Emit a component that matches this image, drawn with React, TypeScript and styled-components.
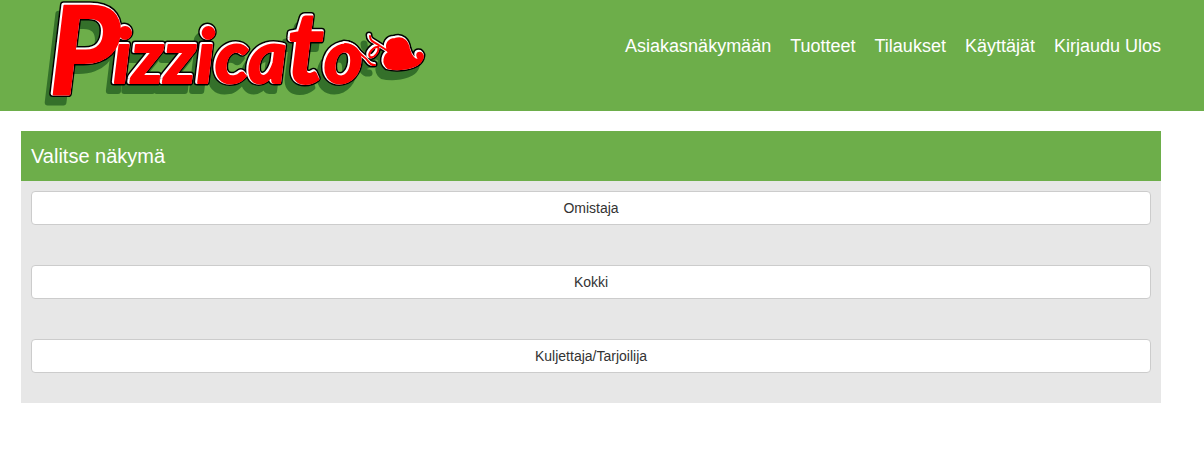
import React from "react";
import styled, { createGlobalStyle } from "styled-components";

const GlobalStyle = createGlobalStyle`
  *, *::before, *::after { box-sizing: border-box; }
  body {
    margin: 0;
    background: #fff;
    color: #333;
    font-family: Arial, "Liberation Sans", sans-serif;
    font-size: 14px;
    line-height: 20px;
  }
`;

const Header = styled.header`
  display: flex;
  justify-content: space-between;
  align-items: flex-start;
  padding: 0 43px 0 40px;
  background: #6dae4a;
`;

const HomeLink = styled.a`
  display: block;
  flex: none;
`;

const LogoArt = styled.svg`
  display: block;
  width: 392px;
  height: 111px;
`;

const LogoText = styled.text`
  font-family: Lato, "Liberation Sans", sans-serif;
  font-style: italic;
  font-weight: 700;
  font-size: 75px;
`;

const Initial = styled.tspan`
  font-size: 122px;
`;

const TallLetter = styled.tspan`
  font-size: 100px;
`;

const Nav = styled.nav`
  display: flex;
  flex-wrap: wrap;
  justify-content: flex-end;
  gap: 19px;
  padding-top: 36px;
`;

const NavLink = styled.a`
  color: #fff;
  font-size: 18px;
  line-height: 20px;
  text-decoration: none;
  white-space: nowrap;
`;

const Panel = styled.main`
  margin: 20px 43px 50px 21px;
  background: #e7e7e7;
`;

const PanelTitle = styled.h1`
  margin: 0;
  padding: 10px;
  background: #6dae4a;
  color: #fff;
  font-size: 20px;
  font-weight: 400;
  line-height: 30px;
`;

const ViewList = styled.div`
  display: flex;
  flex-direction: column;
  gap: 40px;
  padding: 10px 10px 30px;
`;

const ViewButton = styled.button`
  width: 100%;
  padding: 6px 12px;
  border: 1px solid #ccc;
  border-radius: 4px;
  background: #fff;
  color: #333;
  font: inherit;
  cursor: pointer;
`;

function Logo() {
  return (
    <LogoArt viewBox="40 0 392 111" role="img" aria-label="Pizzicato">
      <defs>
        <g id="wordmark" strokeLinejoin="round">
          <LogoText x="48" y="93">
            <Initial>P</Initial>
            <tspan x="112" y="82">izzica</tspan>
            <TallLetter>t</TallLetter>
            <tspan>o</tspan>
          </LogoText>
          <path d="M387 50C384 43 388 38 394 38C402 35 407 41 408 48C410 55 414 61 418 58C415 54 416 51 420 52C424 55 421 61 416 64C407 69 394 69 387 67C381 62 383 54 389 51Z" />
        </g>
        <g id="vine" fill="none" strokeLinecap="round" strokeLinejoin="round">
          <path d="M344 43C354 43 357 52 363 56C368 59 368 65 374 64" />
          <path d="M369 35C369 41 374 41 379 45L387 50M377 46C373 45 366 53 369 56C373 58 379 50 377 46" />
        </g>
      </defs>
      <g transform="translate(-5 9)" fill="#34702a" stroke="#34702a">
        <use href="#wordmark" strokeWidth="6" />
        <use href="#vine" strokeWidth="7" />
      </g>
      <g stroke="#000">
        <use href="#wordmark" strokeWidth="7" />
        <use href="#vine" strokeWidth="7" />
      </g>
      <g fill="#fff" stroke="#fff">
        <use href="#wordmark" strokeWidth="4" />
        <use href="#vine" strokeWidth="4" />
      </g>
      <g transform="translate(1 1)" fill="#f00" stroke="#f00">
        <use href="#wordmark" strokeWidth="2" />
        <use href="#vine" strokeWidth="2" />
      </g>
    </LogoArt>
  );
}

const links = ["Asiakasnäkymään", "Tuotteet", "Tilaukset", "Käyttäjät", "Kirjaudu Ulos"];
const views = ["Omistaja", "Kokki", "Kuljettaja/Tarjoilija"];

export default function App() {
  return (
    <>
      <GlobalStyle />
      <Header>
        <HomeLink href="#" aria-label="Pizzicato">
          <Logo />
        </HomeLink>
        <Nav>
          {links.map((label) => (
            <NavLink key={label} href="#">
              {label}
            </NavLink>
          ))}
        </Nav>
      </Header>
      <Panel>
        <PanelTitle>Valitse näkymä</PanelTitle>
        <ViewList>
          {views.map((label) => (
            <ViewButton key={label} type="button">
              {label}
            </ViewButton>
          ))}
        </ViewList>
      </Panel>
    </>
  );
}
